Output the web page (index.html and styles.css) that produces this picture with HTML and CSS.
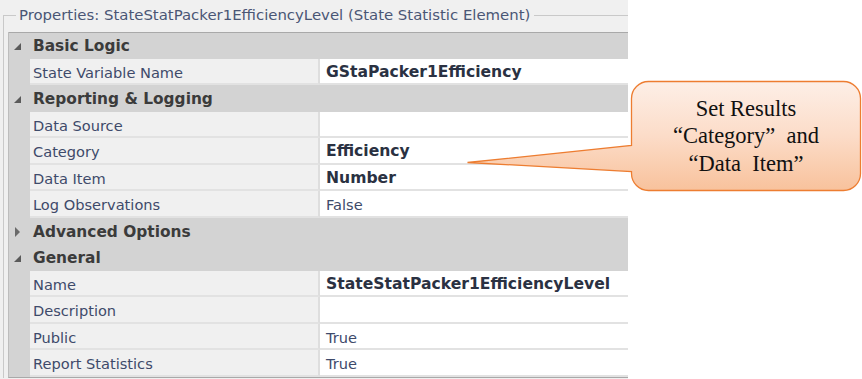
FILE: index.html
```html
<!DOCTYPE html>
<html>
<head>
<meta charset="utf-8">
<link rel="stylesheet" href="styles.css">
</head>
<body>
<div class="panel">
  <div class="groupbox">
    <div class="legend"><span class="legend-text">Properties: StateStatPacker1EfficiencyLevel (State Statistic Element)</span></div>
    <div class="grid">
      <div class="cat"><span class="tri open"></span><span class="cat-label">Basic Logic</span></div>
      <div class="prop"><span class="gut"></span><span class="name">State Variable Name</span><span class="val bold">GStaPacker1Efficiency</span></div>
      <div class="cat"><span class="tri open"></span><span class="cat-label">Reporting &amp; Logging</span></div>
      <div class="prop"><span class="gut"></span><span class="name">Data Source</span><span class="val"></span></div>
      <div class="prop"><span class="gut"></span><span class="name">Category</span><span class="val bold">Efficiency</span></div>
      <div class="prop"><span class="gut"></span><span class="name">Data Item</span><span class="val bold">Number</span></div>
      <div class="prop"><span class="gut"></span><span class="name">Log Observations</span><span class="val">False</span></div>
      <div class="cat"><span class="tri closed"></span><span class="cat-label">Advanced Options</span></div>
      <div class="cat"><span class="tri open"></span><span class="cat-label">General</span></div>
      <div class="prop"><span class="gut"></span><span class="name">Name</span><span class="val bold">StateStatPacker1EfficiencyLevel</span></div>
      <div class="prop"><span class="gut"></span><span class="name">Description</span><span class="val"></span></div>
      <div class="prop"><span class="gut"></span><span class="name">Public</span><span class="val">True</span></div>
      <div class="prop last"><span class="gut"></span><span class="name">Report Statistics</span><span class="val">True</span></div>
    </div>
  </div>
</div>

<div class="callout">
  <svg class="callout-shape" width="862" height="379" viewBox="0 0 862 379">
    <defs>
      <linearGradient id="cg" x1="0" y1="0" x2="0" y2="1">
        <stop offset="0" stop-color="#fdefe7"/>
        <stop offset="0.5" stop-color="#fcdcc8"/>
        <stop offset="1" stop-color="#f8c29c"/>
      </linearGradient>
    </defs>
    <path d="M648.5 81.5 H843.5 A17 17 0 0 1 860.5 98.5 V173.5 A17 17 0 0 1 843.5 190.5 H648.5 A17 17 0 0 1 631.5 173.5 V171.5 L467.5 162.5 L631.5 145.5 V98.5 A17 17 0 0 1 648.5 81.5 Z" fill="url(#cg)" stroke="#ed7d31" stroke-width="1.3"/>
  </svg>
  <div class="callout-text">
    <div>Set Results</div>
    <div>“Category”&nbsp; and</div>
    <div>“Data&nbsp; Item”</div>
  </div>
</div>
</body>
</html>
```

FILE: styles.css
```css
html, body {
  margin: 0;
  padding: 0;
  background: #ffffff;
}
body {
  width: 862px;
  height: 379px;
  position: relative;
  overflow: hidden;
  font-family: "DejaVu Sans", sans-serif;
}
.panel {
  width: 628px;
  height: 379px;
  overflow: hidden;
  background: #f0f0f0;
}
.groupbox {
  width: 700px;
  margin-left: 3px;
}
.legend {
  position: relative;
  margin-top: 15px;
  height: 16px;
  border-left: 1px solid #c9c9c9;
  border-top: 1px solid #c9c9c9;
}
.legend-text {
  position: absolute;
  left: 12px;
  top: -11px;
  padding: 0 4px 0 3px;
  background: #f0f0f0;
  font-size: 14.9px;
  line-height: 20px;
  color: #4a5675;
  white-space: nowrap;
}
.grid {
  display: flex;
  flex-direction: column;
  border-left: 1px solid #c9c9c9;
  padding-left: 4px;
}
.cat, .prop {
  height: 26.5px;
  display: flex;
  align-items: stretch;
  border-left: 1px solid #bdbdbd;
}
.cat {
  background: #d3d3d3;
}
.cat:first-child {
  box-shadow: inset 0 1px 0 #a9a9a9;
}
.prop.last {
  border-bottom: 1px solid #a9a9a9;
}
.tri {
  width: 24px;
  flex: none;
  position: relative;
}
.tri.open::before {
  content: "";
  position: absolute;
  left: 5px;
  top: 11px;
  width: 0;
  height: 0;
  border-left: 7px solid transparent;
  border-bottom: 7px solid #5a5a5a;
}
.tri.closed::before {
  content: "";
  position: absolute;
  left: 6px;
  top: 9px;
  width: 0;
  height: 0;
  border-top: 5px solid transparent;
  border-bottom: 5px solid transparent;
  border-left: 5px solid #6a6a6a;
}
.cat-label {
  font-weight: bold;
  font-size: 15.4px;
  line-height: 26px;
  padding-top: 1px;
  color: #3b3b3b;
}
.gut {
  width: 21px;
  flex: none;
  background: #d3d3d3;
}
.name {
  width: 290px;
  flex: none;
  box-sizing: border-box;
  background: #f0f0f0;
  border-bottom: 2px solid #e2e2e2;
  border-right: 2px solid #dedede;
  padding-left: 3px;
  padding-top: 1px;
  font-size: 14.6px;
  line-height: 25px;
  color: #3e4a6a;
  white-space: nowrap;
}
.val {
  flex: 1;
  background: #ffffff;
  border-bottom: 2px solid #e2e2e2;
  padding-left: 6px;
  padding-top: 1px;
  font-size: 14.6px;
  line-height: 25px;
  color: #3e4a6a;
  white-space: nowrap;
}
.val.bold {
  font-weight: bold;
  font-size: 15.6px;
  color: #2a3142;
}
.callout {
  position: absolute;
  left: 0;
  top: 0;
  width: 862px;
  height: 379px;
  pointer-events: none;
}
.callout-shape {
  position: absolute;
  left: 0;
  top: 0;
}
.callout-text {
  position: absolute;
  left: 632px;
  top: 82px;
  width: 228px;
  height: 108px;
  display: flex;
  flex-direction: column;
  justify-content: center;
  align-items: center;
  font-family: "Liberation Serif", serif;
  font-size: 22.5px;
  line-height: 27.5px;
  color: #111111;
}
```
